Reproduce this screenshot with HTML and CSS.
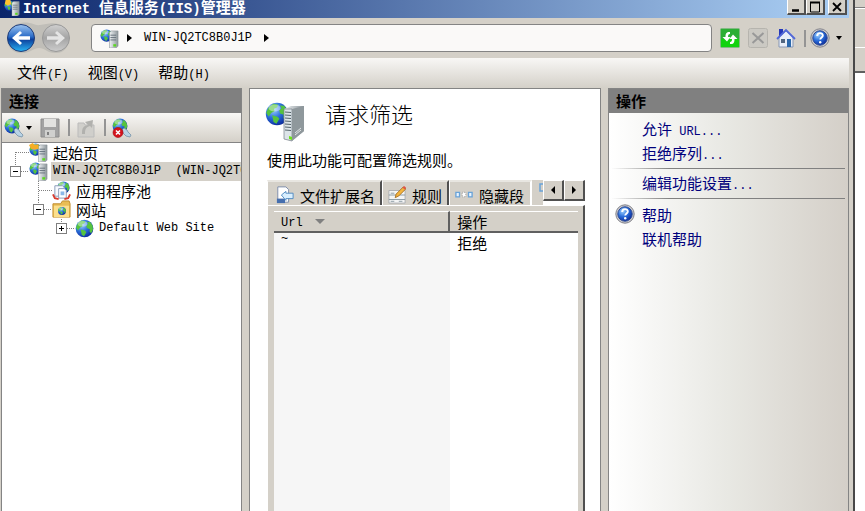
FILE: index.html
```html
<!DOCTYPE html>
<html lang="zh-CN">
	<head>
		<meta charset="utf-8">
		<meta name="viewport" content="width=device-width, initial-scale=1.0">
		<title>Internet 信息服务(IIS)管理器</title>
		<link rel="stylesheet" href="styles.css">
	</head>
	<body>
		<!-- shared icons -->
		<svg class="sprite" aria-hidden="true">
			<defs>
				<radialGradient id="sea" cx=".35" cy=".3" r=".75">
					<stop offset="0" stop-color="#9fd2ff"/>
					<stop offset=".5" stop-color="#2c70dc"/>
					<stop offset="1" stop-color="#0a2a9c"/>
				</radialGradient>
				<linearGradient id="steel">
					<stop offset="0" stop-color="#f0f3f5"/>
					<stop offset="1" stop-color="#8c959a"/>
				</linearGradient>
				<linearGradient id="blue" x2="0" y2="1">
					<stop offset="0" stop-color="#9cc4f0"/>
					<stop offset=".45" stop-color="#2b6cc8"/>
					<stop offset=".55" stop-color="#0c3f9c"/>
					<stop offset="1" stop-color="#28b4f4"/>
				</linearGradient>
				<linearGradient id="grey" x2="0" y2="1">
					<stop offset="0" stop-color="#d0d0d0"/>
					<stop offset=".5" stop-color="#a4a4a4"/>
					<stop offset="1" stop-color="#cccccc"/>
				</linearGradient>
			</defs>
			<symbol id="globe" viewBox="0 0 20 20">
				<circle cx="10" cy="10" r="9.3" fill="url(#sea)"/>
				<path d="M3 4.500 7 1.500l4 .8-1 2.200-2.500 1.200.5 2-2.600 1.200L3 12 1 9zM6 11l4.500 1.200L12 14l-2.500 4.200-2.400-1.600zM12.500 3l3.500.2 2.600 4 .3 4-1.800 3.700-1.800-1.600.3-2.600-3-1.100-.8-2.800 2-1.600z" fill="#55c340"/>
				<ellipse cx="8" cy="5" rx="5" ry="3" fill="#fff" opacity=".4"/>
			</symbol>
			<symbol id="server" viewBox="0 0 20 20">
				<use href="#globe" width="14" height="14"/>
				<path d="M10 3.500 12 2h7v16l-2 2h-7z" fill="url(#steel)" stroke="#8a9298" stroke-width=".6"/>
				<path d="M11 6.500h6M11 9h6M11 11.500h6" stroke="#66727c"/>
				<path d="M14 16h3v2.500h-3z" fill="#5bd820"/>
			</symbol>
			<symbol id="help" viewBox="0 0 20 20">
				<circle cx="10" cy="10" r="9.2" fill="#c8c8cc" stroke="#85858c"/>
				<circle cx="10" cy="10" r="7.2" fill="url(#sea)" stroke="#2c4a94"/>
				<path d="M7.200 8c0-4 5.800-3.600 5.600-.4-.1 1.700-2.600 2-2.600 4" fill="none" stroke="#fff" stroke-width="1.900"/>
				<circle cx="10.200" cy="14.200" r="1.200" fill="#fff"/>
			</symbol>
			<symbol id="connect" viewBox="0 0 20 20">
				<use href="#globe" width="16" height="16"/>
				<path d="m10 12 2-2 3 2 1 2 3 3-1 2-4-1-3-3z" fill="#b9d3e5" stroke="#7391a7" stroke-width=".8"/>
			</symbol>
		</svg>

		<div class="window">
			<header class="titlebar">
				<svg class="titlebar-icon" viewBox="0 0 20 20"><use href="#server"/><path d="M2 0h6l1 5-4 2-4-2z" fill="#ffc22d"/></svg>
				<h1><span class="latin">Internet&nbsp;</span>信息服务<span class="latin">(IIS)</span>管理器</h1>
				<button class="caption" aria-label="最小化"><svg viewBox="0 0 12 12"><path d="M2 9.500h7" stroke="#000" stroke-width="2.500"/></svg></button>
				<button class="caption" aria-label="最大化"><svg viewBox="0 0 12 12"><path d="M1 1.500h10M1.500 1v10h9V1" fill="none" stroke="#000"/><path d="M1 1.500h10" stroke="#000" stroke-width="2"/></svg></button>
				<button class="caption caption-close" aria-label="关闭"><svg viewBox="0 0 12 12"><path d="m2 2 8 8m0-8-8 8" stroke="#000" stroke-width="1.800"/></svg></button>
			</header>

			<div class="navbar">
				<svg class="travel" viewBox="0 0 66 34">
					<path d="M16 2c10-2 13 3 19 2s12-3 18-1c16 5 14 30-3 29-8 0-10-5-16-5s-9 6-19 5C-3 30-2 5 16 2z" fill="#c0beb8"/>
					<circle cx="16" cy="17" r="13.500" fill="url(#blue)" stroke="#203c78"/>
					<path d="m7 17 8-7 2 2-3.500 3.200H25v3.600H13.500L17 22l-2 2z" fill="#fff"/>
					<circle cx="51" cy="17" r="13.500" fill="url(#grey)" stroke="#999"/>
					<path d="m60 17-8-7-2 2 3.500 3.200H42v3.600h11.500L50 22l2 2z" fill="#e4e4e4"/>
				</svg>
				<div class="address">
					<svg class="icon" viewBox="0 0 20 20"><use href="#server"/></svg>
					<svg class="arrow" viewBox="0 0 6 8"><path d="m0 0 5 4-5 4z"/></svg>
					<button class="crumb latin">WIN-JQ2TC8B0J1P</button>
					<svg class="arrow" viewBox="0 0 6 8"><path d="m0 0 5 4-5 4z"/></svg>
				</div>
				<button class="tool" aria-label="刷新">
					<svg viewBox="0 0 20 20"><rect x=".5" y=".5" width="19" height="19" rx="1" fill="#2cae35" stroke="#83ba83"/><path d="M1 11h18v8H1z" fill="#12d20e"/><path d="M10 4C6 3.500 5.500 6 5.500 9H2.500L7 13.500 10.500 9H8c0-2 .5-3 2-3zM10 16c4 .5 4.500-2 4.500-5h3L13 6.500 9.500 11H12c0 2-.5 3-2 3z" fill="#fff"/></svg>
				</button>
				<button class="tool" aria-label="停止" disabled>
					<svg viewBox="0 0 20 20"><rect x=".5" y=".5" width="19" height="19" rx="2" fill="#cbc9c3" stroke="#b6b4ae"/><path d="m4.500 5 11 10m0-10-11 10" stroke="#999" stroke-width="2"/></svg>
				</button>
				<button class="tool" aria-label="主页">
					<svg viewBox="0 0 20 20"><path d="M3 1h4v7H3z" fill="#2538b8"/><path d="M3 9 10 3l7 6v10H3z" fill="#e9eef8" stroke="#8797b5"/><path d="M1 11 10 2l9 9" fill="none" stroke="#5268d8" stroke-width="1.800"/><path d="M11 11h4v8h-4z" fill="#2c68ac"/><path d="M5 11h4v4H5z" fill="#526680"/></svg>
				</button>
				<span class="divider"></span>
				<button class="tool tool-help" aria-label="帮助"><svg viewBox="0 0 20 20"><use href="#help"/></svg><svg class="drop" viewBox="0 0 6 4"><path d="M0 0h6L3 4z"/></svg></button>
			</div>

			<nav class="menubar">
				<button>文件<span class="latin">(F)</span></button>
				<button>视图<span class="latin">(V)</span></button>
				<button>帮助<span class="latin">(H)</span></button>
			</nav>

			<div class="panes">
				<section class="pane connections">
					<h2>连接</h2>
					<div class="pane-tools">
						<button class="tool tool-connect" aria-label="连接"><svg viewBox="0 0 20 20"><use href="#connect"/></svg><svg class="drop" viewBox="0 0 6 4"><path d="M0 0h6L3 4z"/></svg></button>
						<button class="tool" aria-label="保存" disabled><svg viewBox="0 0 20 20"><path d="M1 1h18v18H1z" fill="#a2a2a2" stroke="#8c8c8c"/><path d="M4 1h12v8H4z" fill="#e2e2e0"/><path d="M5 12h10v7H5z" fill="#d0d0ce"/><path d="M7 14h2v3H7z" fill="#808080"/></svg></button>
						<span class="divider"></span>
						<button class="tool" aria-label="向上" disabled><svg viewBox="0 0 20 20"><path d="M2 5h6l1 2h9v12H2z" fill="#d0cfcb" stroke="#bbb"/><path d="M6 16c0-6 1-8 6-9L9 4l8-2-1 8-2-2c-4 1-5 3-5 8z" fill="#b1b1ae"/></svg></button>
						<span class="divider"></span>
						<button class="tool" aria-label="断开连接"><svg viewBox="0 0 20 20"><use href="#connect"/><circle cx="6" cy="14.500" r="5" fill="#d4121c" stroke="#a20b12" stroke-width=".6"/><path d="m4 12.500 4 4m0-4-4 4" stroke="#fff" stroke-width="1.600"/></svg></button>
					</div>
					<ul class="tree">
						<li class="level-1">
							<span class="joint joint-start"></span><span class="dash dash-long"></span>
							<svg class="icon" viewBox="0 0 20 20"><use href="#server"/><path d="m0 2 4-2 2 2 4-1v5L6 7 2 6z" fill="#f5ad25"/></svg>
							<a href="#">起始页</a>
						</li>
						<li class="level-1">
							<span class="joint joint-end"><button class="toggle" aria-label="折叠"><svg viewBox="0 0 9 9"><path d="M2 4.500h5" stroke="#000"/></svg></button></span><span class="dash"></span>
							<svg class="icon" viewBox="0 0 20 20"><use href="#server"/></svg>
							<a class="latin selected" href="#">WIN-JQ2TC8B0J1P&nbsp; (WIN-JQ2TC</a>
						</li>
						<li class="level-2">
							<span class="joint"></span><span class="dash dash-long"></span>
							<svg class="icon" viewBox="0 0 20 20"><g transform="translate(5 0)"><use href="#globe" width="14" height="14"/></g><path d="M3 5h8l2 2v9H3z" fill="#f7faff" stroke="#8a9bb8"/><path d="M7 8h6l2 2v8H7z" fill="#fff" stroke="#8a9bb8"/><path d="M9 11h4v4H9z" fill="#8bb8e8"/><path d="m1 14 2 4 4 1m12-5-2 4-4 1" fill="none" stroke="#d83c30" stroke-width="2"/></svg>
							<a href="#">应用程序池</a>
						</li>
						<li class="level-2">
							<span class="joint joint-end"><button class="toggle" aria-label="折叠"><svg viewBox="0 0 9 9"><path d="M2 4.500h5" stroke="#000"/></svg></button></span><span class="dash"></span>
							<svg class="icon" viewBox="0 0 20 20"><path d="M1 4h8l2-3h7l1 3v14H1z" fill="#e9bd55" stroke="#c08b29"/><path d="M2 6h16v12H2z" fill="#fbdf8c"/><g transform="translate(6 7)"><use href="#globe" width="9" height="9"/></g></svg>
							<a href="#">网站</a>
						</li>
						<li class="level-3">
							<span class="joint joint-end"><button class="toggle" aria-label="展开"><svg viewBox="0 0 9 9"><path d="M2 4.500h5M4.500 2v5" stroke="#000"/></svg></button></span><span class="dash"></span>
							<svg class="icon" viewBox="0 0 20 20"><use href="#globe"/></svg>
							<a class="latin" href="#">Default Web Site</a>
						</li>
					</ul>
				</section>

				<main class="pane feature">
					<div class="feature-title">
						<svg viewBox="0 0 40 40">
							<use href="#globe" width="24" height="24"/>
							<path d="m19 7 7-3h13v25l-12 10-8-2z" fill="url(#steel)"/>
							<path d="m19 7 8 0v32l-8-2z" fill="#dce4e8" stroke="#758087" stroke-width=".7"/>
							<path d="M27 7 39 4v25L27 39z" fill="#8f989c"/>
							<path d="m20 10 6 .5M20 13l6 .5M20 16l6 .5M20 19l6 .5M20 22l6 .5M20 25l6 .5M20 28l6 .5" stroke="#56646c"/>
							<path d="m30 33 6-5m-6 3 6-5" stroke="#e1e5e6"/>
							<path d="m24 34 3 1v3l-3-1z" fill="#6de21c"/>
						</svg>
						<h2>请求筛选</h2>
					</div>
					<p class="feature-text">使用此功能可配置筛选规则。</p>
					<div class="tabs" role="tablist">
						<button class="tab" role="tab">
							<svg viewBox="0 0 20 20"><path d="M2 1h9l3 3v14H2z" fill="#fff" stroke="#7888a8"/><path d="M1 14h9v5H1z" fill="#456eae"/><path d="m6 10 5-4v2h8v6h-8v2z" fill="#d9efff" stroke="#4b87c0"/></svg>文件扩展名
						</button>
						<button class="tab" role="tab" aria-selected="true">
							<svg viewBox="0 0 20 20"><path d="M1 5h18v14H1z" fill="#f4f5f5" stroke="#a9adb0"/><path d="M1 10h18M1 15h18M3 8h4M3 17h4m5 0h4" stroke="#85959f"/><path d="m8 13 1-4 8-8 3 2-8 8z" fill="#f4b43c" stroke="#a4712a"/><path d="m16 2 2-2 2 2-1 2z" fill="#df5548"/></svg>规则
						</button>
						<button class="tab tab-last" role="tab">
							<svg viewBox="0 0 20 20"><path d="M1 7h4v5H1zM15 7h4v5h-4z" fill="#e8f4ff" stroke="#6aa3d8" stroke-width="1.500"/><path d="M8 7h4v5H8z" fill="#fff" stroke="#999" stroke-dasharray="1"/></svg>隐藏段
						</button>
						<span class="tab-rest"><svg viewBox="0 0 4 10"><path d="M4 1H1v7h3" fill="none" stroke="#6aa3d8" stroke-width="1.500"/></svg></span>
						<button class="scroll" aria-label="向左"><svg viewBox="0 0 6 8"><path d="M5 0v8L1 4z"/></svg></button>
						<button class="scroll" aria-label="向右"><svg viewBox="0 0 6 8"><path d="m1 0 4 4-4 4z"/></svg></button>
					</div>
					<div class="tab-panel">
						<div class="list">
							<table>
								<thead>
									<tr><th class="url"><span class="latin">Url</span><svg viewBox="0 0 10 5"><path d="M0 0h10L5 5z" fill="#808080"/></svg></th><th>操作</th></tr>
								</thead>
								<tbody>
									<tr><td class="latin root">~</td><td>拒绝</td></tr>
								</tbody>
							</table>
						</div>
					</div>
				</main>

				<aside class="pane actions">
					<h2>操作</h2>
					<ul>
						<li><a href="#">允许<span class="latin"> URL...</span></a></li>
						<li><a href="#">拒绝序列<span class="latin">...</span></a></li>
					</ul>
					<ul>
						<li><a href="#">编辑功能设置<span class="latin">...</span></a></li>
					</ul>
					<ul>
						<li><svg viewBox="0 0 20 20"><use href="#help"/></svg><a href="#">帮助</a></li>
						<li><a href="#">联机帮助</a></li>
					</ul>
				</aside>
			</div>
		</div>

		<div class="backdrop"><div class="behind"></div></div>
	</body>
</html>
```

FILE: styles.css
```css
* {
	box-sizing: border-box;
}

body {
	margin: 0;
	display: flex;
	height: 100vh;
	overflow: hidden;
	background: #fff;
	color: #000;
	font-family: "Noto Sans CJK SC", sans-serif;
	font-size: 15px;
	line-height: 19px;
}

h1, h2, p, ul {
	margin: 0;
	padding: 0;
}

ul {
	list-style: none;
}

button {
	margin: 0;
	padding: 0;
	border: 0;
	background: none;
	color: inherit;
	font: inherit;
}

a {
	color: inherit;
	text-decoration: none;
}

svg {
	display: block;
	flex: none;
}

.sprite {
	width: 0;
	height: 0;
}

.latin {
	font-family: "Liberation Mono", monospace;
	font-size: 12px;
}

.icon {
	width: 19px;
	height: 19px;
}

.window {
	flex: 1;
	min-width: 0;
	display: flex;
	flex-direction: column;
	padding-right: 4px;
	border-right: 2px solid #484848;
	background: #d4d0c8;
}

/* title bar */
.titlebar {
	flex: none;
	display: flex;
	align-items: flex-start;
	height: 18px;
	padding-right: 2px;
	overflow: hidden;
	background: linear-gradient(90deg, #0a246a, #a6caf0 95%);
	color: #fff;
}

.titlebar h1 {
	flex: 1;
	font-size: 15px;
	line-height: 14px;
	white-space: nowrap;
}

.titlebar .latin {
	font-size: 14px;
}

.titlebar-icon {
	width: 18px;
	height: 16px;
	margin: 0 2px 0 3px;
}

.caption {
	display: grid;
	place-items: center;
	width: 19px;
	height: 15px;
	background: #d4d0c8;
	border: solid;
	border-width: 0 2px 2px 1px;
	border-color: #fff #505050 #505050 #fff;
}

.caption svg {
	width: 12px;
	height: 12px;
}

.caption-close {
	margin-left: 3px;
}

/* back/forward, address, buttons */
.navbar {
	flex: none;
	display: flex;
	align-items: center;
	height: 40px;
	padding: 0 5px;
}

.travel {
	width: 66px;
	height: 34px;
}

.address {
	flex: 1;
	display: flex;
	align-items: center;
	gap: 8px;
	height: 28px;
	margin: 0 8px 0 20px;
	padding: 0 8px;
	border: 1px solid #848484;
	border-radius: 4px;
	background: #faf9f8;
}

.arrow {
	width: 6px;
	height: 8px;
}

.address .crumb {
	margin: 0 4px 0 3px;
}

.tool {
	display: flex;
	align-items: center;
	gap: 6px;
	margin-right: 8px;
}

.tool svg {
	width: 20px;
	height: 20px;
}

.tool .drop {
	width: 6px;
	height: 4px;
}

.tool-help {
	margin: 0 2px 0 4px;
}

.divider {
	width: 2px;
	height: 17px;
	background: #949494;
}

.menubar {
	flex: none;
	display: flex;
	gap: 19px;
	height: 30px;
	padding: 0 17px;
	background: linear-gradient(#f8f7f5, #d4d0c8);
}

/* panes */
.panes {
	flex: 1;
	min-height: 0;
	display: grid;
	grid-template-columns: 241fr 352fr 241fr;
	gap: 7px;
	padding-left: 1px;
}

.pane {
	min-width: 0;
	border: 1px solid #848484;
	border-bottom: 0;
	background: #fff;
	overflow: hidden;
}

.connections h2,
.actions h2 {
	height: 24px;
	padding-left: 7px;
	background: #808080;
	font-size: 15px;
	line-height: 24px;
}

.pane-tools {
	display: flex;
	align-items: center;
	height: 30px;
	padding-left: 2px;
	border-bottom: 1px solid #848484;
	background: linear-gradient(#f8f7f5, #d4d0c8);
}

.pane-tools .tool {
	margin: 0 8px 0 6px;
}

.pane-tools .tool-connect {
	gap: 2px;
	margin: 0 2px 0 0;
}

.tree li {
	display: flex;
	align-items: center;
	height: 19px;
	white-space: nowrap;
}

.tree a {
	margin-left: 3px;
	padding-left: 2px;
}

.tree .selected {
	flex: 1;
	background: #d4d0c8;
}

.level-1 {
	padding-left: 8px;
}

.level-2 {
	padding-left: 31px;
}

.level-3 {
	padding-left: 54px;
}

.joint {
	flex: none;
	display: grid;
	place-items: center;
	width: 11px;
	height: 19px;
	background: repeating-linear-gradient(#808080 0 1px, transparent 1px 2px) 5px 0 / 1px 100% no-repeat;
}

.joint-start {
	background-size: 1px 10px;
	background-position: 5px 9px;
}

.joint-end {
	background-size: 1px 9px;
}

.dash {
	flex: none;
	width: 8px;
	height: 1px;
	background: repeating-linear-gradient(90deg, #808080 0 1px, transparent 1px 2px);
}

.dash-long {
	width: 13px;
	margin-left: -5px;
}

.toggle {
	width: 11px;
	height: 11px;
	border: 1px solid #808080;
	background: #fff;
}

/* feature view */
.feature {
	display: flex;
	flex-direction: column;
	padding: 13px 15px 0;
}

.feature-title {
	display: flex;
	align-items: flex-start;
	gap: 20px;
}

.feature-title svg {
	width: 40px;
	height: 40px;
}

.feature-title h2 {
	font-size: 22px;
	font-weight: 300;
	line-height: 22px;
}

.feature-text {
	margin: 8px 0 11px 2px;
}

.tabs {
	display: flex;
	height: 25px;
	margin-left: 2px;
}

.tab {
	display: flex;
	align-items: center;
	gap: 6px;
	padding: 3px 5px 0 8px;
	border: solid;
	border-width: 2px 2px 0 1px;
	border-color: #e8e6e1 #505050 #fff #fff;
	background: #d4d0c8;
	white-space: nowrap;
}

.tab svg {
	width: 18px;
	height: 18px;
}

.tab + .tab {
	padding-left: 5px;
}

.tabs .tab-last {
	padding-right: 6px;
	border-right-color: #fff;
}

.tab-rest {
	flex: 1;
	display: flex;
	justify-content: flex-end;
	height: 25px;
	padding-top: 3px;
	background: #d4d0c8;
}

.tab-rest svg {
	width: 4px;
	height: 10px;
}

.scroll {
	display: grid;
	place-items: center;
	width: 21px;
	height: 21px;
	border: solid;
	border-width: 1px 2px 2px 1px;
	border-color: #fff #505050 #505050 #fff;
	background: #d4d0c8;
}

.scroll svg {
	width: 6px;
	height: 8px;
}

.tab-panel {
	flex: 1;
	display: flex;
	margin-left: 2px;
	padding: 5px 5px 0 6px;
	border: solid;
	border-width: 1px 2px 0 1px;
	border-color: #fff #505050 #fff #fff;
	background: #d4d0c8;
}

.list {
	flex: 1;
	background: linear-gradient(90deg, #f6f6f6 58%, #fff 58%);
}

.list table {
	width: 100%;
	border-collapse: separate;
	border-spacing: 0;
	table-layout: fixed;
}

.list th {
	padding: 0 7px;
	border-top: 1px solid #fff;
	border-bottom: 2px solid #606060;
	background: #d4d0c8;
	font-weight: 400;
	line-height: 16px;
	text-align: left;
}

.list .url {
	width: 58%;
	border-right: 2px solid #606060;
}

.url svg {
	display: inline-block;
	width: 10px;
	height: 5px;
	margin-left: 12px;
	vertical-align: middle;
}

.list td {
	padding: 0 7px;
}

.list .root {
	line-height: 12px;
	vertical-align: top;
}

/* actions */
.actions {
	background: linear-gradient(90deg, #fff, #e8e8e3 50%, #d4cfc8);
}

.actions ul {
	padding: 3px 0 2px;
	margin: 0 3px;
	border-bottom: 1px solid;
	border-image: linear-gradient(90deg, transparent, #808080 25%) 1;
}

.actions ul:last-child {
	border: 0;
}

.actions h2 + ul {
	padding-top: 5px;
}

.actions li {
	display: flex;
	align-items: center;
	height: 24px;
	padding-left: 30px;
	color: #00007c;
}

.actions li svg {
	width: 20px;
	height: 20px;
	margin: 0 7px 0 -27px;
}

.actions .latin {
	white-space: pre;
}

/* window partly visible behind */
.backdrop {
	flex: none;
	width: 10px;
	background: #fff;
}

.behind {
	height: 73px;
	border-bottom: 2px solid #606060;
	background: linear-gradient(#d4d0c8 7px, #808080 7px 8px, #fff 8px 9px, #d4d0c8 9px 47px, #fff 47px 48px, #d4d0c8 48px);
}
```
